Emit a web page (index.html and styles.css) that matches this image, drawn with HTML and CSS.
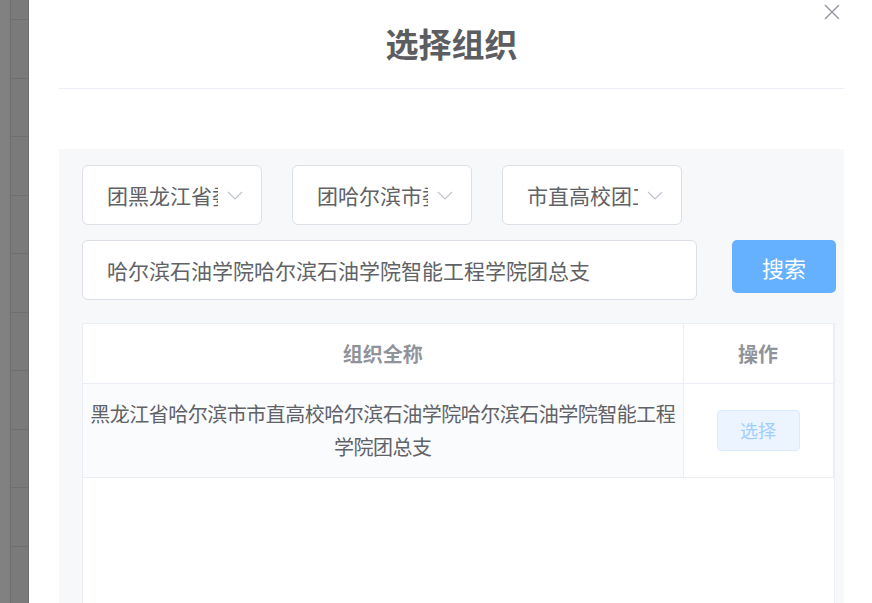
FILE: index.html
```html
<!DOCTYPE html>
<html>
<head>
    <meta charset="utf-8">
    <title>选择组织</title>
    <link rel="stylesheet" href="styles.css">
</head>
<body>
    <div class="backdrop">
        <div class="backdrop-col"></div>
        <div class="backdrop-rows">
            <div class="brow"></div><div class="brow"></div><div class="brow"></div>
            <div class="brow"></div><div class="brow"></div><div class="brow"></div>
            <div class="brow"></div><div class="brow"></div><div class="brow"></div>
            <div class="brow"></div>
        </div>
    </div>

    <div class="drawer">
        <button class="close" aria-label="关闭">
            <svg width="16" height="16" viewBox="0 0 16 16">
                <path d="M1 1 L15 15 M15 1 L1 15" stroke="#909399" stroke-width="1.3" fill="none"/>
            </svg>
        </button>
        <div class="drawer-header">
            <h1>选择组织</h1>
        </div>

        <div class="panel">
            <div class="select-row">
                <div class="select">
                    <span class="select-text">团黑龙江省委</span>
                    <svg class="arrow" width="16" height="9" viewBox="0 0 16 9"><path d="M1 1 L8 8 L15 1" stroke="#c0c4cc" stroke-width="1.2" fill="none"/></svg>
                </div>
                <div class="select">
                    <span class="select-text">团哈尔滨市委</span>
                    <svg class="arrow" width="16" height="9" viewBox="0 0 16 9"><path d="M1 1 L8 8 L15 1" stroke="#c0c4cc" stroke-width="1.2" fill="none"/></svg>
                </div>
                <div class="select">
                    <span class="select-text">市直高校团工委</span>
                    <svg class="arrow" width="16" height="9" viewBox="0 0 16 9"><path d="M1 1 L8 8 L15 1" stroke="#c0c4cc" stroke-width="1.2" fill="none"/></svg>
                </div>
            </div>

            <div class="search-row">
                <div class="input">哈尔滨石油学院哈尔滨石油学院智能工程学院团总支</div>
                <button class="btn-search">搜索</button>
            </div>

            <div class="table-wrap">
                <table class="org-table">
                    <thead>
                        <tr>
                            <th class="col-name">组织全称</th>
                            <th class="col-op">操作</th>
                        </tr>
                    </thead>
                    <tbody>
                        <tr>
                            <td class="col-name">黑龙江省哈尔滨市市直高校哈尔滨石油学院哈尔滨石油学院智能工程学院团总支</td>
                            <td class="col-op"><button class="btn-pick">选择</button></td>
                        </tr>
                    </tbody>
                </table>
            </div>
        </div>
    </div>
</body>
</html>
```

FILE: styles.css
```css
* {
    box-sizing: border-box;
    margin: 0;
    padding: 0;
}

body {
    font-family: "Noto Sans CJK SC", "Noto Sans", sans-serif;
    width: 872px;
    height: 603px;
    overflow: hidden;
    display: flex;
    background-color: #7a7a7a;
}

/* dimmed page behind the drawer */
.backdrop {
    width: 29px;
    flex-shrink: 0;
    display: flex;
    border-right: 1px solid #6e6e6e;
}

.backdrop-col {
    width: 11px;
    background-color: #818181;
    border-right: 1px solid #6f6f6f;
}

.backdrop-rows {
    flex: 1;
    padding-top: 19px;
}

.brow {
    height: 58.5px;
    border-top: 1px solid #6f6f6f;
}

.drawer {
    flex: 1;
    height: 603px;
    background-color: #fff;
    padding: 0 28px 0 30px;
    position: relative;
}

.close {
    position: absolute;
    top: 4px;
    right: 32px;
    border: none;
    background: none;
    cursor: pointer;
    line-height: 0;
}

.drawer-header {
    height: 89px;
    border-bottom: 1px solid #ebeef5;
    display: flex;
    justify-content: center;
    padding-top: 20px;
}

.drawer-header h1 {
    font-size: 33px;
    line-height: 46px;
    font-weight: bold;
    color: #5b5d60;
}

.panel {
    margin-top: 60px;
    background-color: #f7f8fa;
    padding: 16px 8px 0 23px;
    height: 454px;
}

.select-row {
    display: flex;
    gap: 30px;
    margin-bottom: 15px;
}

.select {
    width: 180px;
    height: 60px;
    background-color: #fff;
    border: 1px solid #dcdfe6;
    border-radius: 6px;
    display: flex;
    align-items: center;
    padding: 0 18px 0 24px;
}

/* long names are cut by the box, like a real select */
.select-text {
    width: 111px;
    overflow: hidden;
    white-space: nowrap;
    font-size: 21px;
    color: #606266;
}

.arrow {
    margin-left: auto;
}

.search-row {
    display: flex;
    align-items: flex-start;
    gap: 35px;
    margin-bottom: 23px;
}

.input {
    width: 615px;
    height: 60px;
    background-color: #fff;
    border: 1px solid #dcdfe6;
    border-radius: 6px;
    padding: 0 24px;
    display: flex;
    align-items: center;
    font-size: 21px;
    color: #606266;
    white-space: nowrap;
}

.btn-search {
    width: 104px;
    height: 53px;
    border: none;
    border-radius: 5px;
    background-color: #66b1ff;
    color: #fff;
    font-family: inherit;
    font-size: 22px;
}

.table-wrap {
    width: 753px;
    height: 280px;
    background-color: #fff;
    border-left: 1px solid #ebeef5;
    border-right: 1px solid #ebeef5;
    border-top: 1px solid #ebeef5;
}

.org-table {
    width: 750px;
    border-collapse: collapse;
    table-layout: fixed;
}

.org-table th,
.org-table td {
    border-bottom: 1px solid #ebeef5;
    text-align: center;
}

.org-table th {
    height: 59px;
    font-size: 20px;
    font-weight: bold;
    color: #909399;
}

.org-table .col-name {
    width: 600px;
    border-right: 1px solid #ebeef5;
}

.org-table .col-op {
    width: 150px;
    border-right: 1px solid #ebeef5;
}

.org-table td {
    height: 94px;
    padding: 0;
    font-size: 20px;
    line-height: 33px;
    color: #606266;
}

.org-table td.col-name {
    background-color: #fafbfd;
    letter-spacing: -0.5px;
}

.btn-pick {
    width: 83px;
    height: 41px;
    background-color: #ecf5ff;
    border: 1px solid #d9ecff;
    border-radius: 4px;
    color: #a0cfff;
    font-family: inherit;
    font-size: 18px;
}
```
